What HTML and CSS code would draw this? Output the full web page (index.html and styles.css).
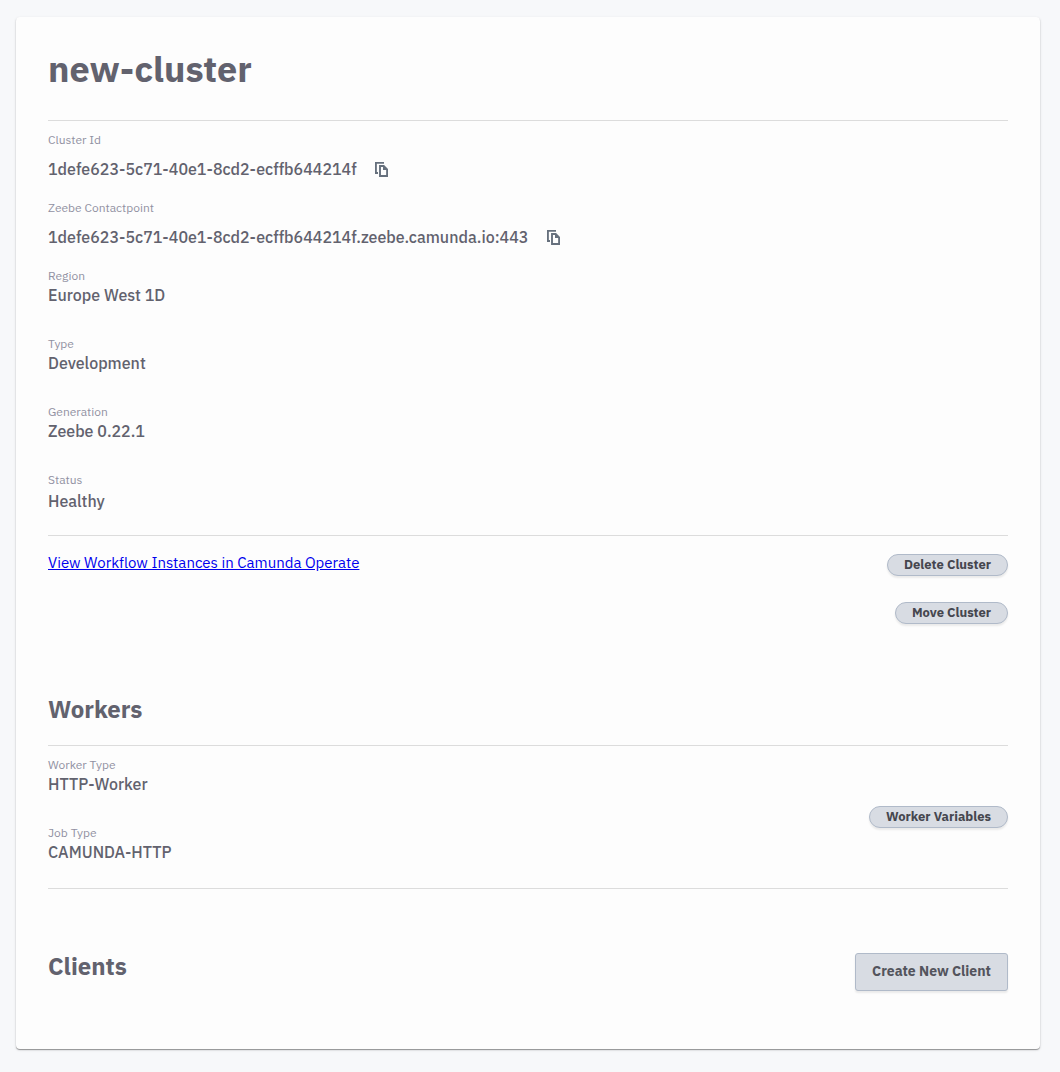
FILE: index.html
```html
<!DOCTYPE html>
<html lang="en">
<head>
<meta charset="utf-8">
<title>new-cluster</title>
<link rel="stylesheet" href="styles.css">
</head>
<body>
<main class="card">
  <h1 class="title">new-cluster</h1>
  <section class="details">
    <div class="field field-copy">
      <div class="label">Cluster Id</div>
      <div class="value"><span>1defe623-5c71-40e1-8cd2-ecffb644214f</span>
        <svg class="copy" viewBox="0 0 13 15"><path d="M3 11H.9V.9H9"/><path d="M5 4H8.700L12.100 7.400V14H5z"/><path class="fold" d="M8 4h1l3 3v1H8z"/></svg></div>
    </div>
    <div class="field field-copy">
      <div class="label">Zeebe Contactpoint</div>
      <div class="value"><span>1defe623-5c71-40e1-8cd2-ecffb644214f.zeebe.camunda.io:443</span>
        <svg class="copy" viewBox="0 0 13 15"><path d="M3 11H.9V.9H9"/><path d="M5 4H8.700L12.100 7.400V14H5z"/><path class="fold" d="M8 4h1l3 3v1H8z"/></svg></div>
    </div>
    <div class="field"><div class="label">Region</div><div class="value">Europe West 1D</div></div>
    <div class="field"><div class="label">Type</div><div class="value">Development</div></div>
    <div class="field"><div class="label">Generation</div><div class="value">Zeebe 0.22.1</div></div>
    <div class="field field-status"><div class="label">Status</div><div class="value">Healthy</div></div>
  </section>
  <section class="actions">
    <a class="link" href="#">View Workflow Instances in Camunda Operate</a>
    <div class="buttons">
      <button class="pill delete">Delete Cluster</button>
      <button class="pill move">Move Cluster</button>
    </div>
  </section>
  <h2 class="heading">Workers</h2>
  <section class="workers">
    <div>
      <div class="field"><div class="label">Worker Type</div><div class="value">HTTP-Worker</div></div>
      <div class="field"><div class="label">Job Type</div><div class="value">CAMUNDA-HTTP</div></div>
    </div>
    <button class="pill variables">Worker Variables</button>
  </section>
  <section class="clients">
    <h2 class="heading">Clients</h2>
    <button class="create">Create New Client</button>
  </section>
</main>
</body>
</html>
```
FILE: styles.css
```css
* { box-sizing: border-box; }
body {
  margin: 0;
  padding: 17px 20px 22px 16px;
  background: #f7f8fa;
  color: #62626e;
  font-family: "IBM Plex Sans", Roboto, "Noto Sans", sans-serif;
}
.card {
  height: 1032px;
  padding: 0 32px;
  border-radius: 4px;
  background: #fdfdfd;
  box-shadow: 0 1px 1px rgba(0, 0, 0, .36), 0 1px 3px rgba(0, 0, 0, .12);
}
.title { height: 103px; margin: 0; padding-top: 28px; font-size: 36px; line-height: 48px; font-weight: 700; }
.details { height: 415px; padding-top: 11px; border-top: 1px solid #dcdcdc; }
.field { height: 68px; }
.label { font-size: 12px; line-height: 16px; color: #9191a2; }
.value { display: flex; align-items: center; font-size: 16px; line-height: 22px; font-weight: 500; white-space: nowrap; }
.field-copy .value { height: 42px; }
.field-status .value { line-height: 26px; }
.copy { width: 13px; height: 15px; margin: 1px 0 0 18.5px; fill: none; stroke: #66707d; stroke-width: 1.9; }
.copy .fold { fill: #66707d; stroke: none; }
.actions { display: flex; justify-content: space-between; align-items: flex-start; height: 156px; border-top: 1px solid #dcdcdc; }
.link { margin-top: 17px; color: #0000ee; font-size: 15px; line-height: 20px; }
.buttons { display: flex; flex-direction: column; align-items: flex-end; gap: 26px; padding-top: 18px; }
button { padding: 0; border: 1px solid #b0bac9; background: #d8dce3; color: #45464e; font-family: inherit; font-weight: 700; box-shadow: 0 2px 2px rgba(0, 0, 0, .08); }
.pill { height: 22px; border-radius: 11px; font-size: 13px; line-height: 18px; }
.delete { width: 121px; }
.move { width: 113px; }
.variables { width: 139px; }
.heading { margin: 0; font-size: 24px; line-height: 36px; font-weight: 700; }
.workers { display: flex; justify-content: space-between; align-items: flex-start; height: 144px; margin-top: 18px; padding-top: 11px; border: solid #dcdcdc; border-width: 1px 0; }
.workers .pill { margin-top: 49px; }
.clients { display: flex; justify-content: space-between; align-items: flex-start; padding-top: 59px; }
.create { width: 153px; height: 38px; margin-top: 5px; padding-bottom: 2px; border-radius: 3px; font-size: 14px; color: #53545d; }
```
